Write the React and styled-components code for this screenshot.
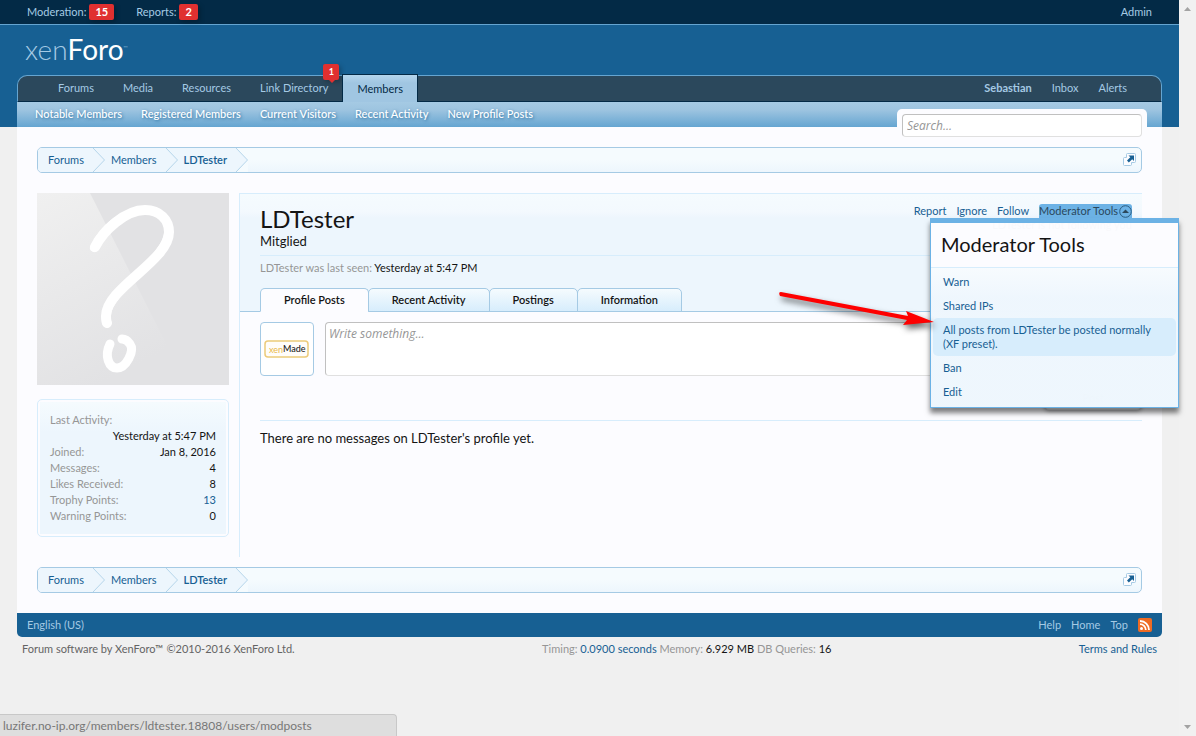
import React, { useState } from "react";
import styled, { createGlobalStyle, css } from "styled-components";

const GlobalStyle = createGlobalStyle`
  * {
    box-sizing: border-box;
  }

  body {
    margin: 0;
    background-color: #f0f0f0;
    color: #141414;
    font-family: Lato, "Open Sans", sans-serif;
    font-size: 11px;
    line-height: 16px;
  }

  a {
    color: #176093;
    text-decoration: none;
  }

  h1, h3, p, ul, dl, dd {
    margin: 0;
    padding: 0;
    font-weight: normal;
  }

  ul {
    list-style: none;
  }
`;

const mainTabs = [
  { name: "Forums" },
  { name: "Media" },
  { name: "Resources" },
  { name: "Link Directory", count: 1 },
  { name: "Members", selected: true },
];

const subLinks = [
  "Notable Members",
  "Registered Members",
  "Current Visitors",
  "Recent Activity",
  "New Profile Posts",
];

const profileTabs = ["Profile Posts", "Recent Activity", "Postings", "Information"];

const stats = [
  { label: "Last Activity:", value: "Yesterday at 5:47 PM" },
  { label: "Joined:", value: "Jan 8, 2016" },
  { label: "Messages:", value: "4" },
  { label: "Likes Received:", value: "8" },
  { label: "Trophy Points:", value: "13", link: true },
  { label: "Warning Points:", value: "0" },
];

const toolLinks = [
  "Warn",
  "Shared IPs",
  "All posts from LDTester be posted normally (XF preset).",
  "Ban",
  "Edit",
];

function PopoutIcon() {
  return (
    <svg width="14" height="14" viewBox="0 0 14 14" aria-hidden="true">
      <path
        d="M3.5 4.5H1.5a1 1 0 0 0-1 1v6a1 1 0 0 0 1 1h6a1 1 0 0 0 1-1v-2h3a1 1 0 0 0 1-1v-7a1 1 0 0 0-1-1h-7a1 1 0 0 0-1 1z"
        fill="#fcfcff"
        stroke="#a5cae4"
      />
      <path d="M5.500 2.500h5.500v5.500L9.200 6.200 5.800 9.400 4 7.500 7.300 4.300z" fill="#176093" />
    </svg>
  );
}

function Breadcrumb() {
  return (
    <CrumbBar aria-label="Breadcrumb">
      {["Forums", "Members", "LDTester"].map((name, i) => (
        <Crumb key={name} href="#" $last={i === 2}>
          <span>{name}</span>
          <svg width="12" height="24" viewBox="0 0 12 24" aria-hidden="true">
            {i === 2 && <path d="M0 0H12V24H0z" fill="#f5fbfe" />}
            <path d="M0 0L11.500 12L0 24" fill="#edf6fd" stroke="#b5d5ea" />
          </svg>
        </Crumb>
      ))}
      <Popout type="button" aria-label="Open quick navigation">
        <PopoutIcon />
      </Popout>
    </CrumbBar>
  );
}

function DefaultAvatar() {
  return (
    <Avatar viewBox="0 0 192 192" role="img" aria-label="LDTester">
      <defs>
        <linearGradient id="shine" x1="0" y1="0" x2="0.4" y2="1">
          <stop offset="0" stopColor="#f0f0f0" />
          <stop offset="1" stopColor="#e2e2e4" />
        </linearGradient>
      </defs>
      <rect width="192" height="192" fill="#e2e2e4" />
      <path d="M0 0H53L150 192H0z" fill="url(#shine)" />
      <g fill="none" stroke="#fff" strokeLinecap="round" strokeLinejoin="round">
        <path d="M58 54C66 38 88 17 108 17C123 17 132 27 132 39C132 68 69 95 69 123C69 127 69 128 70 130" strokeWidth="10" />
        <path d="M57 55C64 40 74 31 84 25M131 33C137 65 71 94 70 122" strokeWidth="8" />
        <path d="M73 151C67 163 72 175 80 175C89 175 98 158 93 151C91 148 88 146 85 146" strokeWidth="9" />
      </g>
    </Avatar>
  );
}

function XenMadeAvatar() {
  return (
    <svg width="46" height="46" viewBox="0 0 46 46" role="img" aria-label="xenMade">
      <rect x="1" y="15" width="43" height="16" rx="3" fill="#fffdfa" stroke="#eccb7a" strokeWidth="1.500" />
      <text x="5" y="27" fontFamily="Lato, sans-serif" fontSize="9" fill="#e9b949">
        xen
      </text>
      <text x="19" y="26" fontFamily="Lato, sans-serif" fontSize="9" fontWeight="500" fill="#222">
        Made
      </text>
    </svg>
  );
}

function RssIcon() {
  return (
    <svg width="14" height="14" viewBox="0 0 14 14" aria-hidden="true">
      <rect width="14" height="14" rx="2" fill="#ee6b24" />
      <circle cx="3.500" cy="10.500" r="1.500" fill="#fff" />
      <path d="M2 6.200A5.800 5.800 0 0 1 7.800 12M2 3A9 9 0 0 1 11 12" fill="none" stroke="#fff" strokeWidth="1.800" />
    </svg>
  );
}

function ModeratorTools() {
  const [open, setOpen] = useState(true);

  return (
    <ToolsWrap>
      <ToolsButton type="button" aria-expanded={open} onClick={() => setOpen(!open)}>
        Moderator Tools
        <svg width="13" height="13" viewBox="0 0 13 13" aria-hidden="true">
          <circle cx="6.500" cy="6.500" r="5.800" fill="none" stroke="#2b5c80" />
          <path d="M3 8L6.500 4.500L10 8z" fill="#2b485c" />
        </svg>
      </ToolsButton>
      {open && (
        <>
          <Menu>
            <h3>Moderator Tools</h3>
            <ul>
              {toolLinks.map((name, i) => (
                <li key={name}>
                  <MenuLink href="#" $active={i === 2}>
                    {name}
                  </MenuLink>
                </li>
              ))}
            </ul>
          </Menu>
          <Arrow width="166" height="50" viewBox="0 0 166 50" aria-hidden="true">
            <path d="M5 5L132 29L130 24L158 35L127 38L131 33L4 9Q2 5 5 5z" fill="#fe0000" />
          </Arrow>
        </>
      )}
    </ToolsWrap>
  );
}

function App() {
  const [tab, setTab] = useState("Profile Posts");

  return (
    <>
      <GlobalStyle />
      <Window>
        <Page>
          {/* moderator bar */}
          <ModBar>
            <ModLink href="#">
              Moderation: <Badge>15</Badge>
            </ModLink>
            <ModLink href="#">
              Reports: <Badge>2</Badge>
            </ModLink>
            <ModLink href="#">Admin</ModLink>
          </ModBar>

          {/* header */}
          <Header>
            <Logo href="#">
              xen<b>Foro</b>
              <sup>™</sup>
            </Logo>
            <NavTabs>
              {mainTabs.map((item) => (
                <NavTab key={item.name} href="#" $selected={item.selected}>
                  {item.name}
                  {item.count && <Balloon>{item.count}</Balloon>}
                </NavTab>
              ))}
              <VisitorTabs>
                <a href="#">
                  <strong>Sebastian</strong>
                </a>
                <a href="#">Inbox</a>
                <a href="#">Alerts</a>
              </VisitorTabs>
            </NavTabs>
            <SubNav>
              {subLinks.map((name) => (
                <a key={name} href="#">
                  {name}
                </a>
              ))}
              <SearchBox>
                <input type="search" placeholder="Search..." aria-label="Search" />
              </SearchBox>
            </SubNav>
          </Header>

          {/* content */}
          <Content>
            <Breadcrumb />
            <Profile>
              <Sidebar>
                <DefaultAvatar />
                <InfoBox>
                  <dl>
                    {stats.map((s) => (
                      <Stat key={s.label} $stacked={s.label === "Last Activity:"}>
                        <dt>{s.label}</dt>
                        <dd>{s.link ? <a href="#">{s.value}</a> : s.value}</dd>
                      </Stat>
                    ))}
                  </dl>
                </InfoBox>
              </Sidebar>
              <MainColumn>
                <ProfileTop>
                  <TopRow>
                    <NameBlock>
                      <UserName>LDTester</UserName>
                      <UserTitle>Mitglied</UserTitle>
                    </NameBlock>
                    <Links>
                      <LinkRow>
                        <a href="#">Report</a>
                        <a href="#">Ignore</a>
                        <a href="#">Follow</a>
                        <ModeratorTools />
                      </LinkRow>
                      <Muted>LDTester is not following you</Muted>
                    </Links>
                  </TopRow>
                  <LastSeen>
                    LDTester was last seen: <span>Yesterday at 5:47 PM</span>
                  </LastSeen>
                  <Tabs role="tablist">
                    {profileTabs.map((name) => (
                      <Tab
                        key={name}
                        type="button"
                        role="tab"
                        aria-selected={tab === name}
                        $active={tab === name}
                        onClick={() => setTab(name)}
                      >
                        {name}
                      </Tab>
                    ))}
                  </Tabs>
                </ProfileTop>
                <Poster>
                  <SmallAvatar href="#">
                    <XenMadeAvatar />
                  </SmallAvatar>
                  <PosterForm>
                    <textarea placeholder="Write something..." aria-label="Write something" />
                    <PostButton type="button">Post</PostButton>
                  </PosterForm>
                </Poster>
                <Empty>There are no messages on LDTester's profile yet.</Empty>
              </MainColumn>
            </Profile>
            <Breadcrumb />
          </Content>

          {/* footer */}
          <FooterBar>
            <a href="#">English (US)</a>
            <FooterLinks>
              <a href="#">Help</a>
              <a href="#">Home</a>
              <a href="#">Top</a>
              <a href="#" aria-label="RSS">
                <RssIcon />
              </a>
            </FooterLinks>
          </FooterBar>
          <Legal>
            <span>Forum software by XenForo™ ©2010-2016 XenForo Ltd.</span>
            <Debug>
              Timing: <a href="#">0.0900 seconds</a> Memory: <b>6.929 MB</b> DB Queries: <b>16</b>
            </Debug>
            <a href="#">Terms and Rules</a>
          </Legal>
        </Page>
        <ScrollTrack>
          <svg width="7" height="4" viewBox="0 0 7 4" aria-hidden="true">
            <path d="M0 4L3.500 0L7 4z" fill="#a3a3a3" />
          </svg>
          <svg width="7" height="4" viewBox="0 0 7 4" aria-hidden="true">
            <path d="M0 0L3.500 4L7 0z" fill="#a3a3a3" />
          </svg>
        </ScrollTrack>
      </Window>
      <StatusBar>luzifer.no-ip.org/members/ldtester.18808/users/modposts</StatusBar>
    </>
  );
}

const Window = styled.div`
  display: flex;
  min-height: 100vh;
`;

const Page = styled.div`
  flex: 1;
  min-width: 0;
`;

const ScrollTrack = styled.div`
  display: flex;
  flex-direction: column;
  justify-content: space-between;
  align-items: center;
  width: 17px;
  padding: 7px 0;
  background-color: #f1f1f1;
`;

const ModBar = styled.nav`
  display: flex;
  align-items: center;
  gap: 22px;
  height: 25px;
  padding: 0 27px;
  border-bottom: 1px solid #65a5d1;
  background-color: #032a46;
`;

const ModLink = styled.a`
  display: flex;
  align-items: center;
  gap: 3px;
  color: #a5cae4;

  &:last-child {
    margin-left: auto;
  }
`;

const Badge = styled.strong`
  padding: 0 6px;
  border-radius: 2px;
  background-color: #e03030;
  box-shadow: 2px 2px 5px rgba(0, 0, 0, 0.25);
  color: #fff;
  line-height: 16px;
`;

const Header = styled.header`
  padding: 0 17px;
  background-color: #176093;
`;

const Logo = styled.a`
  display: block;
  height: 50px;
  padding: 4px 8px;
  color: #a5cae4;
  font-size: 28px;
  font-weight: 300;
  line-height: 40px;

  b {
    color: #fff;
    font-weight: 400;
  }

  sup {
    font-size: 6px;
    line-height: 6px;
    vertical-align: 10px;
  }
`;

const NavTabs = styled.nav`
  display: flex;
  height: 27px;
  padding: 0 34px 0 25px;
  border: 1px solid #65a5d1;
  border-bottom: 1px solid #032a46;
  border-radius: 10px 10px 0 0;
  background-color: #2b485c;
`;

const NavTab = styled.a`
  position: relative;
  padding: 0 14px 0 15px;
  color: #a5cae4;
  line-height: 24px;

  ${(props) =>
    props.$selected &&
    css`
      height: 28px;
      margin-top: -2px;
      padding: 0 14px;
      border: 1px solid #032a46;
      border-bottom: none;
      background: linear-gradient(#b4d5ec, #a0c6e2 8px);
      color: #032a46;
      line-height: 28px;
    `}
`;

const Balloon = styled.strong`
  position: absolute;
  top: -12px;
  right: 3px;
  width: 16px;
  height: 16px;
  border-radius: 2px;
  background-color: #e03030;
  box-shadow: 2px 2px 5px rgba(0, 0, 0, 0.25);
  color: #fff;
  font-size: 9px;
  line-height: 16px;
  text-align: center;

  &::after {
    content: "";
    position: absolute;
    top: 16px;
    left: 6px;
    border: 3px solid transparent;
    border-top-color: #e03030;
    border-bottom: none;
  }
`;

const VisitorTabs = styled.div`
  display: flex;
  gap: 20px;
  margin-left: auto;
  line-height: 24px;

  a {
    color: #a5cae4;
  }
`;

const SubNav = styled.div`
  position: relative;
  display: flex;
  gap: 19px;
  height: 25px;
  padding: 0 18px;
  background: linear-gradient(#a5cae4, #9dc4e0 8px, #65a5d1);
  line-height: 24px;

  a {
    color: #fff;
    font-weight: 500;
    text-shadow: 1px 1px 3px rgba(23, 96, 147, 0.8);
  }
`;

const SearchBox = styled.div`
  position: absolute;
  top: 7px;
  right: 15px;
  width: 250px;
  padding: 5px 5px 0;
  border-radius: 5px;
  background-color: #fcfcff;

  input {
    display: block;
    width: 100%;
    height: 23px;
    padding: 0 4px;
    border: 1px solid #e0e0e0;
    border-top-color: #c0c0c0;
    border-left-color: #c0c0c0;
    border-radius: 4px;
    background-color: #fff;
    font: italic 12px "Open Sans", sans-serif;
  }

  input::placeholder {
    color: #969696;
  }
`;

const Content = styled.main`
  margin: 0 17px;
  padding: 20px;
  background-color: #fcfcff;
`;

const CrumbBar = styled.nav`
  display: flex;
  height: 26px;
  border: 1px solid #a5cae4;
  border-radius: 5px;
  background: linear-gradient(#f5fbfe, #f5fbfe 50%, #edf6fd);
`;

const Crumb = styled.a`
  display: flex;
  gap: 9px;
  padding-left: 6px;
  background-color: #edf6fd;
  font-weight: ${(props) => (props.$last ? 600 : 400)};
  line-height: 24px;

  &:first-child {
    padding-left: 10px;
    border-radius: 4px 0 0 4px;
  }
`;

const Popout = styled.button`
  margin-left: auto;
  padding: 0 4px;
  border: none;
  background: none;

  svg {
    display: block;
  }
`;

const Profile = styled.div`
  display: flex;
  align-items: stretch;
  gap: 10px;
  margin: 20px 0 10px;
`;

const Sidebar = styled.aside`
  width: 192px;
  padding-bottom: 20px;
`;

const Avatar = styled.svg`
  display: block;
  width: 192px;
  height: 192px;
`;

const InfoBox = styled.div`
  margin-top: 14px;
  padding: 2px;
  border: 1px solid #d7edfc;
  border-radius: 5px;

  dl {
    padding: 10px;
    background: linear-gradient(#f5fbfe, #edf6fd 30px);
  }
`;

const Stat = styled.div`
  display: flex;
  flex-direction: ${(props) => (props.$stacked ? "column" : "row")};

  dt {
    color: #969696;
  }

  dd {
    margin-left: auto;
  }
`;

const MainColumn = styled.section`
  flex: 1;
  min-width: 0;
  border-left: 1px solid #d7edfc;
`;

const ProfileTop = styled.div`
  padding: 9px 10px 0 20px;
  border-top: 1px solid #d7edfc;
  border-bottom: 1px solid #a5cae4;
  background: linear-gradient(#f5fbfe, #f3f9fe 18px, #edf6fd 24px);
`;

const TopRow = styled.div`
  display: flex;
  justify-content: space-between;
  padding-bottom: 6px;
  border-bottom: 1px solid #d7edfc;
`;

const NameBlock = styled.div`
  padding-top: 2px;
`;

const UserName = styled.h1`
  font-size: 24px;
  line-height: 28px;
`;

const UserTitle = styled.p`
  font-size: 13px;
  line-height: 16px;
`;

const Links = styled.div`
  text-align: right;
`;

const LinkRow = styled.div`
  display: flex;
  gap: 10px;
`;

const Muted = styled.p`
  color: #969696;
  line-height: 12px;
`;

const ToolsWrap = styled.div`
  position: relative;
`;

const ToolsButton = styled.button`
  display: flex;
  align-items: center;
  gap: 1px;
  height: 14px;
  margin-top: 1px;
  padding: 0;
  border: none;
  border-radius: 3px 3px 0 0;
  background-color: #6cb2e5;
  color: #2b485c;
  font: inherit;
  line-height: 14px;
`;

const Menu = styled.div`
  position: absolute;
  z-index: 2;
  top: 15px;
  right: -47px;
  width: 249px;
  border: 1px solid #6cb2e5;
  border-top-width: 5px;
  background: rgba(252, 252, 255, 0.96);
  box-shadow: 0 5px 5px rgba(0, 0, 0, 0.5);
  text-align: left;

  h3 {
    padding: 0 10px 2px;
    border-bottom: 1px solid #d7edfc;
    font-size: 20px;
    line-height: 42px;
  }

  ul {
    padding: 2px 2px 3px;
    background: linear-gradient(rgba(245, 251, 254, 0.7), rgba(237, 246, 253, 0.9) 30px);
  }
`;

const MenuLink = styled.a`
  display: block;
  padding: 5px 10px;
  border-radius: 5px;
  background-color: ${(props) => (props.$active ? "#d7edfc" : "transparent")};
  line-height: 14px;
`;

const Arrow = styled.svg`
  position: absolute;
  z-index: 3;
  top: 84px;
  right: 190px;
  filter: drop-shadow(2px 4px 3px rgba(0, 0, 0, 0.6));
  pointer-events: none;
`;

const LastSeen = styled.p`
  padding: 4px 0 12px;
  color: #969696;

  span {
    color: #141414;
  }
`;

const Tabs = styled.div`
  display: flex;
  margin-bottom: -1px;
`;

const Tab = styled.button`
  height: 24px;
  margin-right: -1px;
  padding: 0 23px;
  border: 1px solid #a5cae4;
  border-bottom-color: ${(props) => (props.$active ? "#fcfcff" : "#a5cae4")};
  border-radius: 5px 5px 0 0;
  background: ${(props) => (props.$active ? "#fcfcff" : "linear-gradient(#f5fbfe, #d7edfc)")};
  color: #141414;
  font: inherit;
  font-weight: 600;
`;

const Poster = styled.div`
  display: flex;
  gap: 11px;
  margin-left: 20px;
  padding: 10px 0;
  border-bottom: 1px solid #d7edfc;
`;

const SmallAvatar = styled.a`
  width: 54px;
  height: 54px;
  padding: 3px;
  border: 1px solid #a5cae4;
  border-radius: 4px;
  background-color: #fff;
`;

const PosterForm = styled.form`
  flex: 1;

  textarea {
    display: block;
    width: 100%;
    height: 54px;
    padding: 3px;
    border: 1px solid #e0e0e0;
    border-top-color: #c0c0c0;
    border-left-color: #c0c0c0;
    border-radius: 4px;
    background-color: #fff;
    font: italic 12px/16px "Open Sans", sans-serif;
  }

  textarea::placeholder {
    color: #969696;
  }
`;

const PostButton = styled.button`
  display: block;
  width: 98px;
  height: 24px;
  margin: 10px 0 0 auto;
  border: 1px solid #dedede;
  border-radius: 5px;
  background-color: #f0f7fc;
  box-shadow: 0 1px 4px rgba(0, 0, 0, 0.4);
  color: #141414;
  font: inherit;
`;

const Empty = styled.p`
  padding: 9px 0 0 20px;
  font-size: 13px;
`;

const FooterBar = styled.footer`
  display: flex;
  align-items: center;
  justify-content: space-between;
  height: 24px;
  margin: 0 17px;
  padding: 0 10px;
  border-radius: 0 0 5px 5px;
  background-color: #176093;

  a {
    color: #a5cae4;
  }
`;

const FooterLinks = styled.div`
  display: flex;
  align-items: center;
  gap: 10px;

  svg {
    display: block;
  }
`;

const Legal = styled.div`
  display: flex;
  justify-content: space-between;
  padding: 4px 22px;
  color: #646464;
`;

const Debug = styled.span`
  color: #969696;

  b {
    color: #141414;
    font-weight: 400;
  }
`;

const StatusBar = styled.div`
  position: fixed;
  bottom: 0;
  left: 0;
  width: 397px;
  height: 22px;
  padding: 0 3px;
  border: 1px solid #c8c8c8;
  border-width: 1px 1px 0 0;
  border-radius: 0 4px 0 0;
  background-color: #dedede;
  color: #777;
  font-size: 12px;
  line-height: 22px;
`;

export default App;
